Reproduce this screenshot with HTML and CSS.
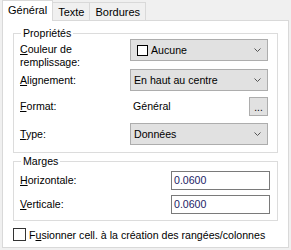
FILE: index.html
```html
<!DOCTYPE html>
<html lang="fr">

<head>
  <meta charset="UTF-8">
  <title>Propriétés de cellule</title>
  <link rel="stylesheet" href="styles.css">
</head>

<body>
  <div class="dialog">
    <div class="tabs">
      <div class="tab active">Général</div>
      <div class="tab">Texte</div>
      <div class="tab">Bordures</div>
    </div>

    <div class="panel">
      <fieldset class="group props">
        <legend>Propriétés</legend>
        <div class="row row-fill">
          <label class="label label-top"><u>C</u>ouleur de<br>remplissage:</label>
          <div class="combo">
            <span class="swatch"></span>
            <span class="combo-text">Aucune</span>
            <svg class="chevron" width="7" height="4" viewBox="0 0 7 4"><polyline points="0.5,0.5 3.5,3.5 6.5,0.5" fill="none" stroke="#555" stroke-width="1"/></svg>
          </div>
        </div>
        <div class="row row-combo">
          <label class="label"><u>A</u>lignement:</label>
          <div class="combo">
            <span class="combo-text">En haut au centre</span>
            <svg class="chevron" width="7" height="4" viewBox="0 0 7 4"><polyline points="0.5,0.5 3.5,3.5 6.5,0.5" fill="none" stroke="#555" stroke-width="1"/></svg>
          </div>
        </div>
        <div class="row row-format">
          <label class="label"><u>F</u>ormat:</label>
          <span class="value">Général</span>
          <button class="dots">...</button>
        </div>
        <div class="row row-type">
          <label class="label"><u>T</u>ype:</label>
          <div class="combo">
            <span class="combo-text">Données</span>
            <svg class="chevron" width="7" height="4" viewBox="0 0 7 4"><polyline points="0.5,0.5 3.5,3.5 6.5,0.5" fill="none" stroke="#555" stroke-width="1"/></svg>
          </div>
        </div>
      </fieldset>

      <fieldset class="group margins">
        <legend>Marges</legend>
        <div class="row row-input first">
          <label class="label"><u>H</u>orizontale:</label>
          <div class="input">0.0600</div>
        </div>
        <div class="row row-input">
          <label class="label"><u>V</u>erticale:</label>
          <div class="input">0.0600</div>
        </div>
      </fieldset>

      <div class="check-row">
        <span class="checkbox"></span>
        <span>F<u>u</u>sionner cell. à la création des rangées/colonnes</span>
      </div>
    </div>
  </div>
</body>

</html>
```

FILE: styles.css
```css
body {
  margin: 0;
  background-color: #f0f0f0;
  font-family: "Liberation Sans", Arial, sans-serif;
  font-size: 10.6px;
  color: #000;
}

u {
  text-decoration-thickness: 1px;
  text-underline-offset: 1px;
}

.dialog {
  padding: 0 2px;
}

.tabs {
  display: flex;
  align-items: flex-end;
  height: 20px;
}

.tab {
  box-sizing: border-box;
  height: 18px;
  line-height: 18px;
  padding: 0 5px;
  margin-left: -1px;
  border: 1px solid #d9d9d9;
  border-bottom: none;
  background-color: #f0f0f0;
  font-size: 11px;
}

.tab.active {
  position: relative;
  z-index: 1;
  height: 21px;
  line-height: 18px;
  margin-left: 0;
  margin-bottom: -1px;
  background-color: #fff;
}

.panel {
  box-sizing: border-box;
  height: 228px;
  border: 1px solid #d9d9d9;
  background-color: #fff;
}

.group {
  margin: 0 10px;
  padding: 0 9px 0 6px;
  border: 1px solid #dcdcdc;
  min-width: 0;
}

.group legend {
  padding: 0 2px;
  margin-left: 1px;
  line-height: 12px;
}

.props {
  margin-top: 6px;
  padding-bottom: 7px;
}

.margins {
  margin-top: 2px;
  padding-right: 7px;
  padding-bottom: 6px;
}

.row {
  display: flex;
  align-items: center;
}

.label {
  width: 110px;
  flex-shrink: 0;
  line-height: 13px;
}

.label-top {
  align-self: flex-start;
  padding-top: 4px;
}

.row-fill {
  align-items: flex-start;
  height: 30px;
}

.row-combo {
  height: 22px;
}

.row-format {
  height: 20px;
  margin-top: 5px;
}

.row-type {
  height: 22px;
  margin-top: 7px;
}

.combo {
  box-sizing: border-box;
  flex: 1;
  display: flex;
  align-items: center;
  height: 22px;
  padding: 0 6px 0 3px;
  border: 1px solid #adadad;
  background-color: #e1e1e1;
}

.combo-text {
  flex: 1;
}

.swatch {
  box-sizing: border-box;
  width: 11px;
  height: 11px;
  margin: 0 3px 0 3px;
  border: 1px solid #000;
  background-color: #fff;
}

.value {
  flex: 1;
  padding-left: 3px;
}

.dots {
  box-sizing: border-box;
  width: 19px;
  height: 19px;
  padding: 4px 0 0;
  border: 1px solid #adadad;
  background-color: #e1e1e1;
  font-family: inherit;
  font-size: 10px;
  line-height: 10px;
}

.row-input {
  height: 20px;
}

.row-input .label {
  width: 151px;
}

.row-input.first {
  margin-top: 3px;
}

.row-input + .row-input {
  margin-top: 4px;
}

.input {
  box-sizing: border-box;
  flex: 1;
  height: 19px;
  line-height: 17px;
  padding-left: 2px;
  border: 1px solid #7a7a7a;
  background-color: #fff;
  color: #1c2466;
}

.check-row {
  display: flex;
  align-items: center;
  gap: 3px;
  margin: 7px 0 0 10px;
}

.checkbox {
  box-sizing: border-box;
  width: 13px;
  height: 13px;
  border: 1px solid #333;
  background-color: #fff;
}
```
